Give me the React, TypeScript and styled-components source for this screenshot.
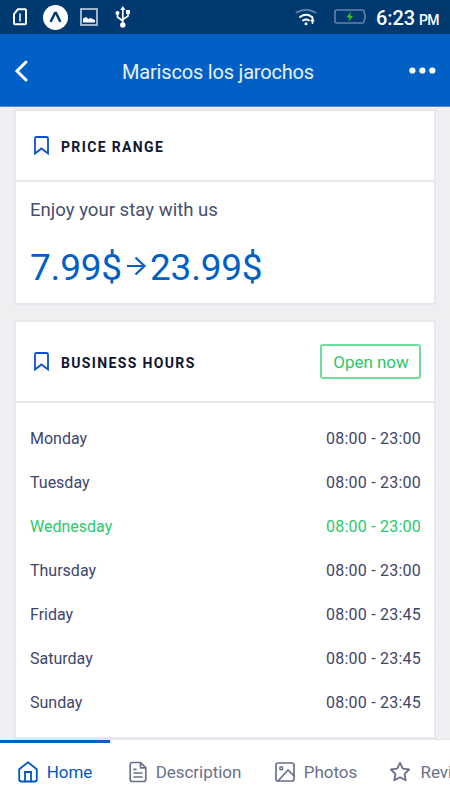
import React from "react";
import styled, { createGlobalStyle } from "styled-components";

const GlobalStyle = createGlobalStyle`
  * { box-sizing: border-box; }
  html, body { margin: 0; padding: 0; background: #efeff1; }
  body { font-family: Roboto, "Noto Sans", sans-serif; overflow: hidden; }
`;

const Screen = styled.div`
  width: 450px;
  height: 800px;
  display: flex;
  flex-direction: column;
  background: #efeff1;
  overflow: hidden;
`;

const StatusBar = styled.div`
  flex: 0 0 34px;
  display: flex;
  align-items: center;
  justify-content: space-between;
  padding: 0 11px 0 13px;
  background: #003870;
  color: #fff;
`;

const Notifications = styled.div`
  display: grid;
  grid-template-columns: 30px 37px 35px 16px;
  align-items: center;
  height: 34px;
`;

const SystemStatus = styled.div`
  display: flex;
  align-items: center;
  gap: 18px;
  height: 34px;
`;

const Clock = styled.div`
  display: flex;
  align-items: baseline;
  gap: 4px;
  margin-left: -7px;
  padding-top: 1px;
  font-size: 20px;
  font-weight: 500;
  letter-spacing: -0.1px;
  white-space: nowrap;
`;

const Meridiem = styled.span`
  font-size: 14px;
  letter-spacing: -0.6px;
`;

const Header = styled.header`
  flex: 0 0 73px;
  display: grid;
  grid-template-columns: 86px 1fr 100px;
  align-items: center;
  padding: 0 14px;
  background: #0060c6;
  border-bottom: 1px solid #5c84cf;
  color: #fff;
`;

const HeaderAction = styled.button<{ $end?: boolean }>`
  display: flex;
  justify-content: ${(p) => (p.$end ? "flex-end" : "flex-start")};
  padding: ${(p) => (p.$end ? "0" : "2px 0 0")};
  border: 0;
  background: none;
  color: inherit;
`;

const Title = styled.h1`
  margin: 4px 0 0;
  text-align: center;
  font-size: 20px;
  font-weight: 400;
  line-height: 24px;
  letter-spacing: -0.19px;
  color: #e9f1fc;
  white-space: nowrap;
`;

const Content = styled.main`
  flex: 0 0 632px;
  display: flex;
  flex-direction: column;
  gap: 15px;
  padding: 2px 14px 0;
`;

const Card = styled.section<{ $height: number }>`
  flex: 0 0 ${(p) => p.$height}px;
  border: 2px solid #e6e6ec;
  background: #fff;
`;

const CardHeader = styled.div<{ $height: number }>`
  display: flex;
  align-items: center;
  height: ${(p) => p.$height}px;
  padding: 0 13px 1px 18px;
  border-bottom: 2px solid #e6e6ec;
`;

const CardTitle = styled.h2`
  flex: 1;
  margin: 3px 0 0 12px;
  font-size: 14px;
  font-weight: 700;
  line-height: 18px;
  letter-spacing: 1.35px;
  color: #10162f;
`;

const OpenBadge = styled.span`
  display: flex;
  align-items: center;
  justify-content: center;
  width: 101px;
  height: 35px;
  padding: 2px 0 0 1px;
  border: 2px solid #6fdc9d;
  border-radius: 3px;
  font-size: 17px;
  letter-spacing: -0.05px;
  color: #2ac86f;
`;

const Tagline = styled.p`
  margin: 16px 14px 0;
  font-size: 18.6px;
  line-height: 24px;
  color: #46506f;
`;

const PriceRow = styled.div`
  display: flex;
  align-items: center;
  margin: 24px 14px 0;
  font-size: 37px;
  line-height: 44px;
  letter-spacing: -0.2px;
  color: #0060c6;
`;

const Hours = styled.ul`
  margin: 0;
  padding: 13px 13px 0 14px;
  list-style: none;
`;

const HoursRow = styled.li<{ $today?: boolean }>`
  display: flex;
  align-items: center;
  justify-content: space-between;
  height: 44px;
  font-size: 16px;
  color: ${(p) => (p.$today ? "#2ac86f" : "#3d476b")};
`;

const Time = styled.span`
  letter-spacing: 0.22px;
`;

const TabBar = styled.nav`
  flex: 0 0 61px;
  display: flex;
  background: #fff;
  border-top: 1px solid #e6e6ec;
`;

const Tab = styled.a<{ $width: number; $active?: boolean }>`
  flex: 0 0 ${(p) => p.$width}px;
  display: flex;
  align-items: center;
  justify-content: center;
  gap: 9px;
  height: 60px;
  padding-top: 3px;
  font-size: 17px;
  letter-spacing: -0.04px;
  white-space: nowrap;
  color: ${(p) => (p.$active ? "#0057c2" : "#697189")};
  box-shadow: ${(p) => (p.$active ? "inset 0 3px #0060c6" : "none")};
`;

const Glyph = styled.svg`
  display: block;
  flex: none;
  fill: none;
  stroke: currentColor;
  stroke-width: 2;
  stroke-linecap: round;
  stroke-linejoin: round;
`;

const BlueGlyph = styled(Glyph)`
  color: #0754c9;
`;

const SdCard = () => (
  <Glyph width="14" height="18" viewBox="0 0 14 18">
    <path d="M5 1.2h7q1 0 1 1v13q0 1-1 1H2q-1 0-1-1V6.2Z" />
    <path d="M7 6v7" strokeWidth="1.5" />
  </Glyph>
);

const ExpoMark = () => (
  <Glyph width="25" height="25" viewBox="0 0 25 25">
    <circle cx="12.5" cy="12.5" r="12.5" fill="#fff" stroke="none" />
    <path d="m8 16 4-8h1l4 8" stroke="#003870" strokeWidth="2.5" strokeLinejoin="miter" />
  </Glyph>
);

const StatusPicture = () => (
  <Glyph width="18" height="18" viewBox="0 0 18 18">
    <rect x="1" y="1" width="16" height="16" stroke="#bccad9" strokeWidth="1.7" strokeLinejoin="miter" />
    <path d="M3 14.5v-4l3-1.5 2.5 2 2-1 4.5 2v2.5Z" fill="#fff" stroke="none" />
  </Glyph>
);

const Usb = () => (
  <Glyph width="16" height="22" viewBox="0 0 16 22">
    <path d="M7.8 18V3M7.8 15 2.5 11V7M7.8 13.5 13 10V6" strokeWidth="1.7" />
    <path d="m5.2 4 2.6-4 2.6 4Z" fill="#fff" stroke="none" />
    <circle cx="7.8" cy="19" r="2.7" fill="#fff" stroke="none" />
    <circle cx="2.5" cy="7" r="2" fill="#fff" stroke="none" />
    <path d="M11 4h4v4h-4Z" fill="#fff" stroke="none" />
  </Glyph>
);

const Wifi = () => (
  <Glyph width="21" height="18" viewBox="-1.5 0 21 18" overflow="visible">
    <path d="M1 4.5Q10.5-1 20 4.5" stroke="#5b80a5" />
    <path d="M4.5 9Q10.5 4.5 16.5 9M7.5 12.5q3-2 6 0" />
    <circle cx="10.5" cy="15.7" r="1.5" fill="#fff" stroke="none" />
    <path d="M17 9.5v5.5M15.9 12.5H18" strokeWidth="1.8" />
  </Glyph>
);

const Battery = () => (
  <Glyph width="32" height="17" viewBox="-1 0 32 17" overflow="visible">
    <path d="M30 4V2.5q0-1.5-1.5-1.5h-26Q1 1 1 2.5v10Q1 14 2.5 14h26q1.5 0 1.5-1.5V11M31 5v5" stroke="#6384a7" strokeWidth="1.6" />
    <path d="m16.8 2.5-4.3 6h3l-.8 4.5 4.4-6.2h-3Z" fill="#3cc419" stroke="none" />
  </Glyph>
);

const Bookmark = () => (
  <BlueGlyph width="15" height="19" viewBox="0 0 15 19">
    <path d="M1 17.5V2.5Q1 1 2.5 1h10Q14 1 14 2.5v15l-6.5-5Z" strokeWidth="1.8" strokeLinejoin="miter" />
  </BlueGlyph>
);

const Arrow = () => (
  <Glyph width="28" height="28" viewBox="0 0 28 28">
    <path d="M5 12h17.5M13.5 3.5l9 8.5-9 8.5" strokeWidth="2.2" strokeLinecap="butt" strokeLinejoin="miter" />
  </Glyph>
);

const HomeIcon = () => (
  <Glyph width="20" height="22" viewBox="0 0 20 22">
    <path d="M1.2 8.2 10 1.3l8.8 6.9v10.3q0 2-2 2H3.2q-2 0-2-2Z" strokeWidth="1.8" />
    <path d="M7 20.5V11h6v9.5" strokeWidth="1.8" strokeLinejoin="miter" />
  </Glyph>
);

const DocumentIcon = () => (
  <Glyph width="18" height="22" viewBox="0 0 18 22">
    <path d="M11.5 1.5h-8Q1.2 1.5 1.2 3.8v14.4q0 2.3 2.3 2.3h11q2.3 0 2.3-2.3V6.8Zm0 0v5.3h5.3M5 8.3h2M5 12h8M5 16h8" strokeWidth="1.7" />
  </Glyph>
);

const PhotoIcon = () => (
  <Glyph width="20" height="20" viewBox="0 0 20 20">
    <rect x="1" y="1" width="18" height="18" rx="2" strokeWidth="1.7" />
    <circle cx="6.2" cy="6.3" r="1.5" strokeWidth="1.5" />
    <path d="m3.5 18.5 9.5-10.5 6 6" strokeWidth="1.7" />
  </Glyph>
);

const StarIcon = () => (
  <Glyph width="22" height="22" viewBox="0 0 24 24">
    <path d="m12 2 3.1 6.3 6.9 1-5 4.8 1.2 6.9-6.2-3.3L5.8 21 7 14.1 2 9.3l6.9-1Z" />
  </Glyph>
);

const BackIcon = () => (
  <Glyph width="14" height="22" viewBox="0 0 14 22">
    <path d="M12 2 3 11l9 9" strokeWidth="3" strokeLinejoin="miter" />
  </Glyph>
);

const MoreIcon = () => (
  <Glyph width="27" height="7" viewBox="0 0 27 7">
    <g fill="#fff" stroke="none">
      <circle cx="3.4" cy="3.5" r="3.1" />
      <circle cx="13.4" cy="3.5" r="3.1" />
      <circle cx="23.3" cy="3.5" r="3.1" />
    </g>
  </Glyph>
);

const schedule = [
  { day: "Monday", time: "08:00 - 23:00" },
  { day: "Tuesday", time: "08:00 - 23:00" },
  { day: "Wednesday", time: "08:00 - 23:00", today: true },
  { day: "Thursday", time: "08:00 - 23:00" },
  { day: "Friday", time: "08:00 - 23:45" },
  { day: "Saturday", time: "08:00 - 23:45" },
  { day: "Sunday", time: "08:00 - 23:45" },
];

export default function App() {
  return (
    <>
      <GlobalStyle />
      <Screen>
        <StatusBar>
          <Notifications>
            <SdCard />
            <ExpoMark />
            <StatusPicture />
            <Usb />
          </Notifications>
          <SystemStatus>
            <Wifi />
            <Battery />
            <Clock>
              6:23<Meridiem>PM</Meridiem>
            </Clock>
          </SystemStatus>
        </StatusBar>
        <Header>
          <HeaderAction aria-label="Back">
            <BackIcon />
          </HeaderAction>
          <Title>Mariscos los jarochos</Title>
          <HeaderAction $end aria-label="More">
            <MoreIcon />
          </HeaderAction>
        </Header>
        <Content>
          <Card $height={196}>
            <CardHeader $height={71}>
              <Bookmark />
              <CardTitle>PRICE RANGE</CardTitle>
            </CardHeader>
            <Tagline>Enjoy your stay with us</Tagline>
            <PriceRow>
              <span>7.99$</span>
              <Arrow />
              <span>23.99$</span>
            </PriceRow>
          </Card>
          <Card $height={419}>
            <CardHeader $height={81}>
              <Bookmark />
              <CardTitle>BUSINESS HOURS</CardTitle>
              <OpenBadge>Open now</OpenBadge>
            </CardHeader>
            <Hours>
              {schedule.map(({ day, time, today }) => (
                <HoursRow key={day} $today={today}>
                  <span>{day}</span>
                  <Time>{time}</Time>
                </HoursRow>
              ))}
            </Hours>
          </Card>
        </Content>
        <TabBar>
          <Tab $width={110} $active>
            <HomeIcon />
            Home
          </Tab>
          <Tab $width={150}>
            <DocumentIcon />
            Description
          </Tab>
          <Tab $width={112}>
            <PhotoIcon />
            Photos
          </Tab>
          <Tab $width={128}>
            <StarIcon />
            Reviews
          </Tab>
        </TabBar>
      </Screen>
    </>
  );
}
